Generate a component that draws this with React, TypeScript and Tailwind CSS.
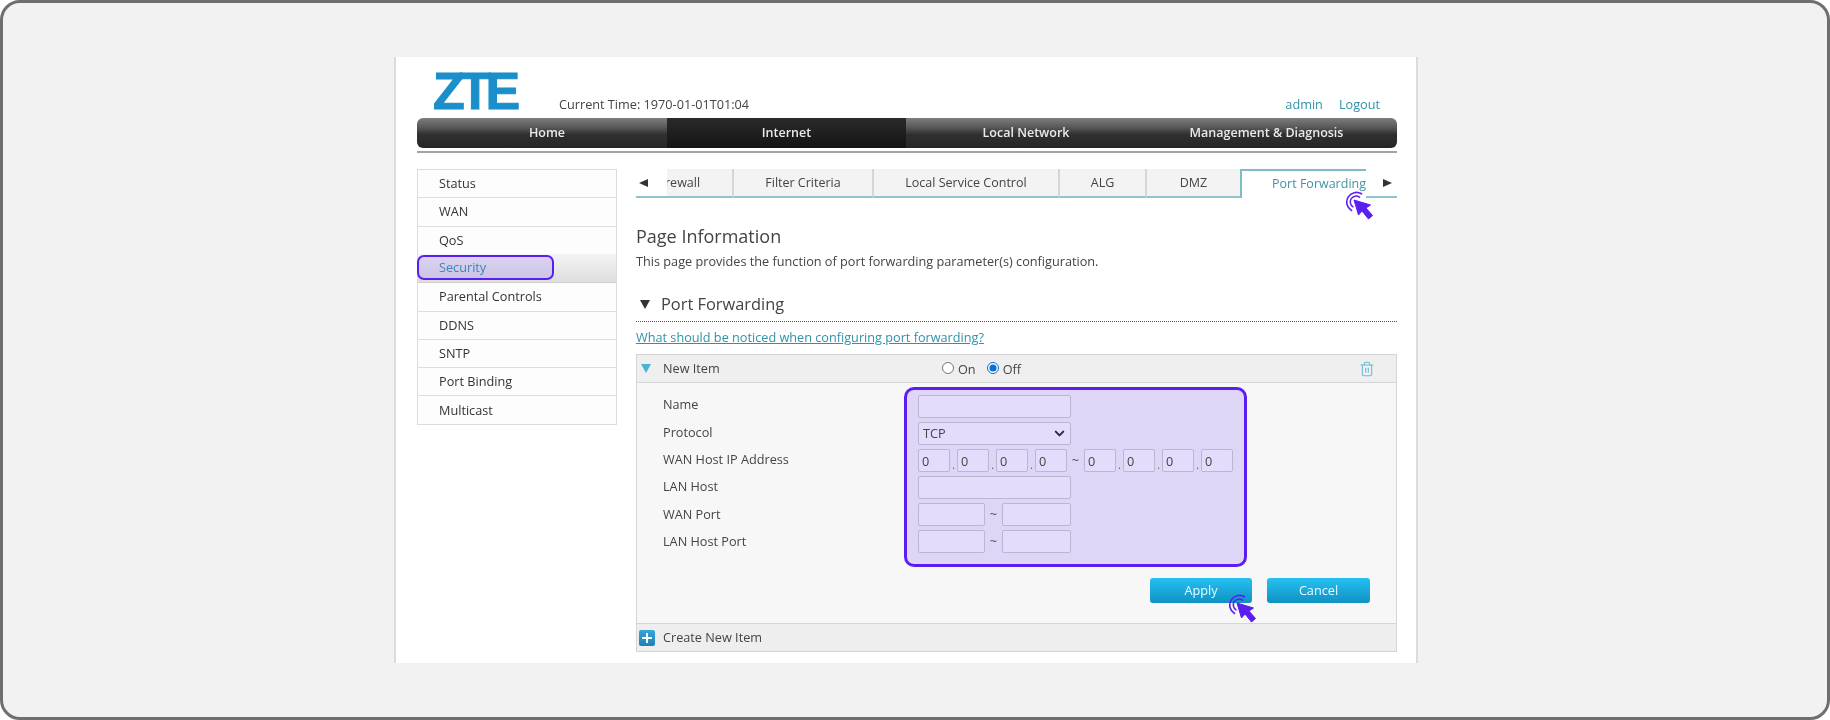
import { ChevronDown, Trash2 } from "lucide-react";

const font = { fontFamily: '"Open Sans", "Noto Sans", sans-serif' };

function Cursor({ className }: { className: string }) {
  return (
    <svg className={className} width="32" height="32" viewBox="0 0 32 32" fill="none">
      <path d="M16.5 2.8 A9.6 9.6 0 1 0 6.5 19.5" stroke="#5a1ff0" strokeWidth="1.6" strokeLinecap="round" />
      <path d="M14.5 6.2 A5.8 5.8 0 1 0 8 15.8" stroke="#5a1ff0" strokeWidth="1.5" strokeLinecap="round" />
      <path d="M9 9 L13.5 24 L17 20 L23.5 28 L27.5 24.5 L21 17 L25.5 14 Z" fill="#5a1ff0" stroke="#5a1ff0" strokeWidth="1" strokeLinejoin="round" />
    </svg>
  );
}

function Tri({ dir, className }: { dir: "left" | "right" | "down"; className: string }) {
  const pts = dir === "left" ? "10,1 10,9 1,5" : dir === "right" ? "1,1 1,9 10,5" : "1,1 11,1 6,10";
  return (
    <svg className={className} width="12" height="11" viewBox="0 0 12 11">
      <polygon points={pts} fill="currentColor" />
    </svg>
  );
}

const navBg = "bg-[linear-gradient(#7d7d7d_0%,#5a5a5a_30%,#303030_55%,#262626_100%)]";

function Field({ w, value = "" }: { w: string; value?: string }) {
  return (
    <input
      readOnly
      value={value}
      className={`${w} h-[23px] rounded-[2px] border border-[#bdb6cf] bg-[#e4dcfb] px-[3px] text-[12.7px] text-[#444] outline-none`}
    />
  );
}

const side = ["Status", "WAN", "QoS", "Security", "Parental Controls", "DDNS", "SNTP", "Port Binding", "Multicast"];
const labels = ["Name", "Protocol", "WAN Host IP Address", "LAN Host", "WAN Port", "LAN Host Port"];

function IpGroup() {
  return (
    <div className="flex items-end">
      <Field w="w-[32px]" value="0" />
      <span className="w-[7px] text-center text-[10px] leading-[14px] text-[#555]">.</span>
      <Field w="w-[32px]" value="0" />
      <span className="w-[7px] text-center text-[10px] leading-[14px] text-[#555]">.</span>
      <Field w="w-[32px]" value="0" />
      <span className="w-[7px] text-center text-[10px] leading-[14px] text-[#555]">.</span>
      <Field w="w-[32px]" value="0" />
    </div>
  );
}

export default function App() {
  return (
    <div
      style={font}
      className="flex h-[720px] w-[1830px] items-start overflow-hidden rounded-[20px] border-[3px] border-[#6f6f6f] bg-[#f2f2f2] pl-[391px] pt-[54px] text-[12.7px] text-[#444]"
    >
      <div className="h-[606px] w-[1024px] border-x-[2px] border-[#dcdcdc] bg-white pl-[21px] pr-[19px] blur-[0.3px]">
        {/* header */}
        <div className="flex h-[61px] items-end">
          <span
            className="ml-[16px] mb-[2px] w-[92px] text-[52px] leading-[50px] font-bold tracking-[-5.5px] text-[#1a8fc9] [-webkit-text-stroke:1px_#1a8fc9]"
            style={{ fontFamily: '"Liberation Sans", sans-serif' }}
          >
            ZTE
          </span>
          <span className="ml-[34px] mb-[5px] leading-[18px]">Current Time: 1970-01-01T01:04</span>
          <span className="ml-auto mb-[5px] mr-[17px] flex gap-[16px] leading-[18px] text-[#2e93a8]">
            <span>admin</span>
            <span>Logout</span>
          </span>
        </div>

        {/* nav */}
        <div className={`flex h-[30px] overflow-hidden rounded-[6px] ${navBg} text-[12.5px] font-semibold text-[#eaeaea]`}>
          <div className="flex w-[250px] items-center justify-center pl-[10px]">Home</div>
          <div className="flex w-[239px] items-center justify-center bg-[linear-gradient(#2a2a2a,#141414)]">Internet</div>
          <div className="flex w-[240px] items-center justify-center">Local Network</div>
          <div className="flex flex-1 items-center justify-center pr-[10px]">Management &amp; Diagnosis</div>
        </div>
        <div className="mt-[3px] h-[2px] bg-[#a3a3a3]" />

        <div className="mt-[16px] flex gap-[19px]">
          {/* sidebar */}
          <div className="h-[256px] w-[200px] border border-[#dcdcdc] bg-[#fdfdfd]">
            {side.map((s, i) => (
              <div
                key={s}
                className={
                  s === "Security"
                    ? "relative -mt-px flex h-[29.5px] items-center border-b border-[#cfcfcf] bg-[linear-gradient(#f4f4f4,#dedede)] pl-[21px] text-[#3b86b8]"
                    : `flex h-[28.25px] items-center pl-[21px] text-[#333] ${i < 8 && side[i + 1] !== "Security" ? "border-b border-[#dedede]" : ""}`
                }
              >
                {s === "Security" && (
                  <div className="absolute left-[-1px] top-[1px] h-[25px] w-[137px] rounded-[7px] border-2 border-[#5a1ff0] bg-[#5a1ff0]/15" />
                )}
                <span className="relative">{s}</span>
              </div>
            ))}
          </div>

          {/* content */}
          <div className="w-[761px]">
            {/* tabs */}
            <div className="relative flex h-[29px] items-stretch text-[12.5px] text-[#444]">
              <div className="flex w-[31px] items-center border-b-2 border-[#8fc4cc] pl-[2px] pt-[2px] text-[#333]">
                <Tri dir="left" className="" />
              </div>
              <div className="flex w-[67px] items-center overflow-hidden border-b-2 border-r-2 border-b-[#8fc4cc] border-r-[#d6d6d6] bg-[#f3f3f3] pt-[2px]">
                <span className="-ml-[2px]">rewall</span>
              </div>
              <div className="flex w-[140px] items-center justify-center border-b-2 border-r-2 border-b-[#8fc4cc] border-r-[#d6d6d6] bg-[#f3f3f3] pt-[2px]">Filter Criteria</div>
              <div className="flex w-[186px] items-center justify-center border-b-2 border-r-2 border-b-[#8fc4cc] border-r-[#d6d6d6] bg-[#f3f3f3] pt-[2px]">Local Service Control</div>
              <div className="flex w-[87px] items-center justify-center border-b-2 border-r-2 border-b-[#8fc4cc] border-r-[#d6d6d6] bg-[#f3f3f3] pt-[2px]">ALG</div>
              <div className="flex w-[93px] items-center justify-center border-b-2 border-b-[#8fc4cc] bg-[#f3f3f3] pt-[2px]">DMZ</div>
              <div className="flex w-[126px] items-center justify-end overflow-hidden border-l-2 border-t-2 border-[#7fbcc6] text-[#3f93a6]">
                <span className="whitespace-nowrap">Port Forwarding</span>
              </div>
              <div className="flex flex-1 items-center border-b-2 border-[#8fc4cc] pl-[16px] pt-[2px] text-[#333]">
                <Tri dir="right" className="" />
              </div>
              <Cursor className="absolute left-[709px] top-[22px]" />
            </div>

            <h2 className="mt-[26px] text-[18px] leading-[24px] text-[#444]">Page Information</h2>
            <p className="mt-[4px] leading-[18px]">This page provides the function of port forwarding parameter(s) configuration.</p>

            <div className="mt-[22px] flex h-[30px] items-center border-b border-dotted border-[#555] pb-[5px] pl-[3px] text-[#333]">
              <Tri dir="down" className="mr-[10px]" />
              <span className="text-[16.4px] text-[#444]">Port Forwarding</span>
            </div>
            <a className="mt-[5px] block leading-[20px] text-[#2e93a8] underline">What should be noticed when configuring port forwarding?</a>

            {/* panel */}
            <div className="mt-[7px] h-[298px] border border-[#d5d5d5] bg-[#f7f7f7]">
              <div className="flex h-[28px] items-center border-b border-[#d5d5d5] bg-[#efefef]">
                <Tri dir="down" className="ml-[3px] text-[#4bb3d6]" />
                <span className="ml-[11px] w-[280px]">New Item</span>
                <label className="ml-[-1px] flex items-center">
                  <input type="radio" readOnly className="m-0 h-[12px] w-[12px] accent-[#0b6fd6]" />
                  <span className="ml-[4px] mt-[2px]">On</span>
                </label>
                <label className="ml-[11px] flex items-center">
                  <input type="radio" readOnly checked className="m-0 h-[12px] w-[12px] accent-[#0b6fd6]" />
                  <span className="ml-[4px] mt-[2px]">Off</span>
                </label>
                <Trash2 className="ml-auto mr-[21px] text-[#6cbcd8]" size={16} strokeWidth={1.6} />
              </div>

              <div className="flex h-[184px] pt-[4px]">
                <div className="w-[267px] pl-[26px] pt-[4px]">
                  {labels.map((l) => (
                    <div key={l} className="flex h-[27.4px] items-center">{l}</div>
                  ))}
                </div>
                <div className="flex h-[180px] w-[343px] flex-col gap-[4px] rounded-[10px] border-[3px] border-[#5a1ff0] bg-[#dfd5f7] pl-[11px] pt-[5px]">
                  <Field w="w-[153px]" />
                  <div className="relative h-[23px] w-[153px]">
                    <select className="h-[23px] w-[153px] appearance-none rounded-[2px] border border-[#bdb6cf] bg-[#e4dcfb] px-[4px] text-[12.7px] text-[#444] outline-none">
                      <option>TCP</option>
                    </select>
                    <ChevronDown className="pointer-events-none absolute right-[4px] top-[4px] text-[#2c2c3a]" size={15} strokeWidth={3.2} />
                  </div>
                  <div className="flex items-center">
                    <IpGroup />
                    <span className="w-[17px] text-center text-[#555]">~</span>
                    <IpGroup />
                  </div>
                  <Field w="w-[153px]" />
                  <div className="flex items-center">
                    <Field w="w-[67px]" />
                    <span className="w-[17px] text-center text-[#555]">~</span>
                    <Field w="w-[69px]" />
                  </div>
                  <div className="flex items-center">
                    <Field w="w-[67px]" />
                    <span className="w-[17px] text-center text-[#555]">~</span>
                    <Field w="w-[69px]" />
                  </div>
                </div>
              </div>

              <div className="flex h-[56px] items-start justify-end gap-[15px] pr-[26px] pt-[11px]">
                <button className="relative h-[25px] w-[102px] rounded-[3px] bg-[linear-gradient(#27c0f2,#0e92c3)] text-[12.7px] text-[#eafcff]">
                  Apply
                  <Cursor className="absolute left-[78px] top-[16px]" />
                </button>
                <button className="h-[25px] w-[103px] rounded-[3px] bg-[linear-gradient(#27c0f2,#0e92c3)] text-[12.7px] text-[#eafcff]">Cancel</button>
              </div>

              <div className="flex h-[28px] items-center border-t border-[#d5d5d5] bg-[#eeeeee]">
                <span className="relative ml-[2px] h-[16px] w-[16px] rounded-[2px] bg-[linear-gradient(#3aa5d8,#1d80b4)]">
                  <span className="absolute left-[3px] top-[7px] h-[2px] w-[10px] bg-white" />
                  <span className="absolute left-[7px] top-[3px] h-[10px] w-[2px] bg-white" />
                </span>
                <span className="ml-[8px]">Create New Item</span>
              </div>
            </div>
          </div>
        </div>
      </div>
    </div>
  );
}
